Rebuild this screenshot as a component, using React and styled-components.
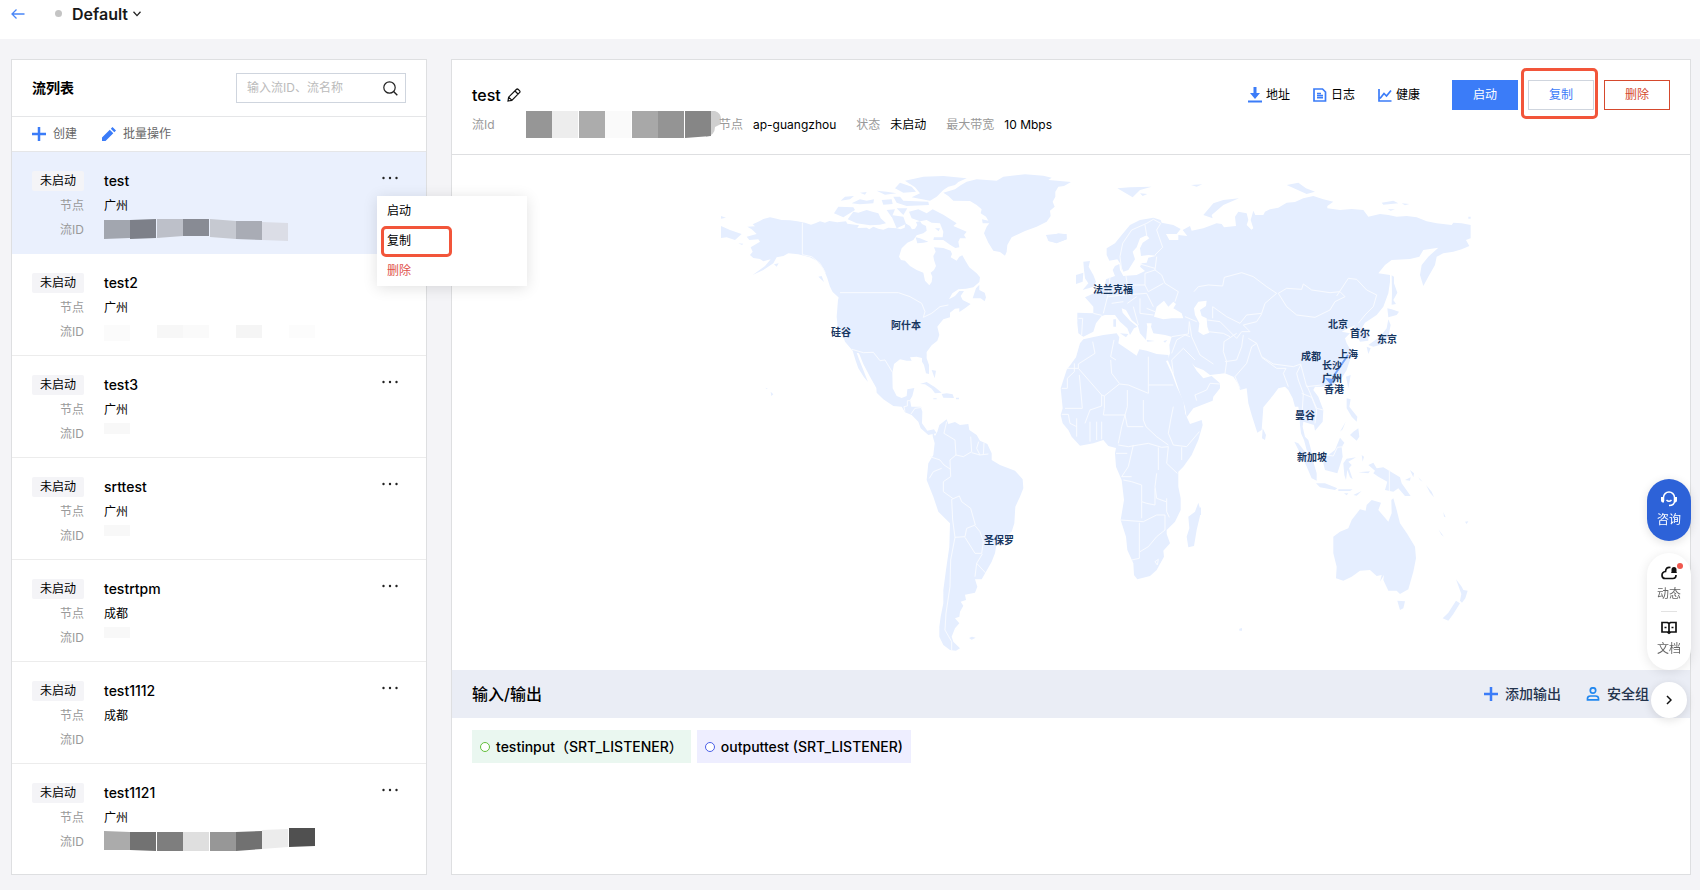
/** @format */
import { useState } from "react";
import styled, { createGlobalStyle, css } from "styled-components";

const streams = [
	{ id: 1, name: "test", node: "广州", mask: "blue" },
	{ id: 2, name: "test2", node: "广州", mask: "faint" },
	{ id: 3, name: "test3", node: "广州", mask: "single" },
	{ id: 4, name: "srttest", node: "广州", mask: "single" },
	{ id: 5, name: "testrtpm", node: "成都", mask: "single" },
	{ id: 6, name: "test1112", node: "成都", mask: "none" },
	{ id: 7, name: "test1121", node: "广州", mask: "dark" },
];

// four corner heights per tile: [x, topLeft, topRight, bottomRight, bottomLeft, colour]
const masks = {
	blue: [
		[0, 4, 4, 22, 23, "#a2a6af"],
		[26, 4, 3, 22, 23, "#7d8089"],
		[53, 3, 3, 20, 22, "#bdc0c9"],
		[79, 3, 3, 20, 20, "#888b94"],
		[106, 3, 5, 23, 21, "#c6c9d1"],
		[132, 5, 5, 24, 23, "#a9acb5"],
		[158, 6, 7, 25, 24, "#dbdde6"],
	],
	faint: [
		[0, 7, 7, 23, 23, "#fbfbfb"],
		[53, 7, 7, 20, 20, "#f7f7f7"],
		[79, 7, 7, 20, 20, "#fafafa"],
		[132, 7, 7, 20, 20, "#f5f5f5"],
		[185, 7, 7, 20, 20, "#fcfcfc"],
	],
	single: [[0, 3, 3, 14, 14, "#f8f8f8"]],
	none: [],
	dark: [
		[0, 3, 4, 22, 22, "#ababab"],
		[26, 4, 4, 23, 22, "#727272"],
		[53, 4, 4, 23, 23, "#7e7e7e"],
		[79, 4, 4, 23, 23, "#dfdfdf"],
		[106, 4, 4, 23, 23, "#979797"],
		[132, 4, 3, 21, 23, "#717171"],
		[158, 2, 1, 19, 21, "#ececec"],
		[185, 0, 0, 18, 19, "#505050"],
	],
	header: [
		[0, 0, 0, 27, 27, "#969696"],
		[26, 0, 0, 27, 27, "#ededed"],
		[53, 0, 0, 27, 27, "#acacac"],
		[79, 0, 0, 27, 27, "#fafafa"],
		[106, 0, 0, 27, 27, "#a8a8a8"],
		[132, 0, 0, 27, 27, "#949494"],
		[159, 0, 0, 25, 27, "#868686"],
	],
};

const cities = [
	{ name: "硅谷", x: 841, y: 332 },
	{ name: "阿什本", x: 906, y: 325 },
	{ name: "法兰克福", x: 1113, y: 289 },
	{ name: "北京", x: 1338, y: 324 },
	{ name: "首尔", x: 1360, y: 333 },
	{ name: "东京", x: 1387, y: 339 },
	{ name: "成都", x: 1311, y: 356 },
	{ name: "上海", x: 1348, y: 354 },
	{ name: "长沙", x: 1332, y: 365 },
	{ name: "广州", x: 1332, y: 378 },
	{ name: "香港", x: 1334, y: 389 },
	{ name: "曼谷", x: 1305, y: 415 },
	{ name: "新加坡", x: 1312, y: 457 },
	{ name: "圣保罗", x: 999, y: 540 },
];

// every region has its own origin, three units to one map unit
const regions = [
	{
		id: "north-america",
		origin: "710 160",
		land: [
			"M112 200L135 199 128 193 148 184 160 177 180 172 200 176 215 180 240 181 262 184 285 188 303 194 318 189 330 184 345 188 358 183 382 187 408 184 412 191 447 196 442 204 470 203 478 208 490 200 505 206 520 209 535 203 560 205 572 208 584 203 586 190 600 198 606 208 615 206 622 195 618 186 630 184 636 192 648 198 650 212 640 220 620 226 610 240 592 248 575 265 567 290 573 300 585 302 600 318 620 330 640 338 645 362 658 376 665 366 667 350 662 338 672 330 678 318 672 300 670 288 677 275 672 262 700 264 722 272 726 282 722 292 740 302 748 290 757 286 768 305 778 322 800 340 810 352 808 366 790 382 768 386 745 388 727 400 717 418 735 408 748 393 762 393 752 408 758 420 782 432 765 445 748 456 748 445 735 446 720 458 720 472 700 478 690 490 682 500 688 525 682 542 665 556 650 576 650 595 657 615 657 642 648 640 642 615 636 605 636 594 620 590 600 592 605 602 590 602 570 598 552 612 547 640 548 685 560 708 575 714 590 708 592 688 613 684 607 708 600 720 604 740 632 740 637 755 636 790 652 812 672 808 680 820 655 825 632 805 625 785 605 765 585 757 575 740 550 738 520 718 500 698 499 684 480 650 460 612 447 580 440 578 448 600 460 630 474 666 462 652 445 625 437 602 428 572 405 545 398 525 383 500 380 470 384 420 388 406 360 380 352 355 340 325 320 302 300 292 265 283 235 280 220 288 200 292 190 310 160 330 128 345 165 318 182 298 160 304 150 297 130 294 120 285 128 275 122 262 150 245 145 238 118 240 110 230 140 222 125 208Z",
			"M700 98L735 88 752 76 770 65 800 58 860 62 880 50 945 43 1000 47 1025 53 1015 60 1050 63 1083 66 1062 78 1045 80 1036 95 1036 110 1028 125 1034 140 1020 152 1022 168 1010 185 980 200 945 213 905 232 892 255 890 275 885 287 870 276 850 272 835 248 822 220 830 200 838 190 818 190 816 178 835 182 828 170 812 160 815 148 800 135 780 123 730 122 715 108Z",
			"M585 62L640 50 700 48 770 55 745 66 735 75 715 80 700 90 680 110 660 122 605 112 630 100 615 82Z M555 85L570 68 605 80 618 95 580 98Z",
			"M413 178L430 155 445 158 470 150 490 156 505 160 512 175 528 190 510 194 480 196 440 190Z M372 160L385 140 430 142 435 150 400 172Z",
			"M392 122L405 110 432 108 420 118Z M425 130L450 118 470 122 492 118 490 130 450 133Z M500 92L530 95 560 100 525 104Z M515 120L545 118 548 132 520 134Z M550 110L570 110 580 122 655 125 657 135 590 138 560 128Z M530 150L555 148 545 172Z M560 145L592 145 580 165Z M543 165L580 170 588 192 560 205Z M450 98L470 96 465 104Z",
			"M597 155L625 148 650 160 668 148 700 164 740 190 730 198 770 215 762 225 768 235 750 235 745 245 748 262 736 264 720 254 700 240 670 240 672 232 698 232 700 215 690 190 665 188 650 180 630 184 605 175Z M617 232L630 235 655 245 640 248 622 250Z M675 205L690 205 686 214Z",
			"M788 415L798 385 808 374 808 390 824 398 828 412 824 424 812 415Z M1007 225L1020 228 1045 220 1068 223 1070 238 1040 248 1018 244 1020 236Z",
			"M630 672L650 666 675 682 695 698 675 700 665 686 645 673Z M695 702L710 700 728 703 732 714 700 713Z M670 715H680V718H670Z M738 713H747V718H738Z M182 695L190 703 184 708Z M167 683L174 686 168 686Z M665 630L678 632 674 655Z",
			"M33 198L60 210 95 222 75 240 50 232 33 234Z M33 168L48 173 33 176Z M325 350L335 348 342 366Z M360 380L390 402 390 416 368 396Z M192 313L206 310 200 320Z M85 250L100 251 96 255Z",
		],
		borders: [
			"M277 188V284L305 290 330 310 346 338",
			"M390 398H565L600 410 635 430 645 455 640 472 665 460 690 440 715 435",
			"M426 568L460 578 490 577 510 602 525 600 548 638",
			"M585 755L582 740 592 738 592 722 604 722 M603 762L615 745 636 742",
		],
	},
	{
		id: "south-america",
		origin: "900 400",
		land: [
			"M98 95L105 108 112 95 118 75 140 58 145 72 165 66 180 75 205 72 208 90 230 105 240 122 262 132 275 160 275 180 300 195 345 212 368 238 370 265 360 290 346 320 343 370 335 395 310 412 290 430 285 460 275 485 258 515 245 538 225 538 232 560 225 578 195 584 198 600 182 605 190 617 180 635 178 650 165 655 178 670 165 685 155 710 160 725 180 745 168 752 150 750 130 735 118 710 118 680 122 650 130 610 130 570 138 510 148 440 150 370 115 335 100 290 80 240 85 190 100 165 104 130 98 108Z",
			"M207 714L216 710 227 713 215 719Z",
		],
		borders: [
			"M90 170L120 180 132 195 152 208 M140 65L132 100 165 120 168 165 150 180 152 230 130 245 130 275 158 295",
			"M168 165L190 170 215 155 212 110 M215 158L240 165 265 162 M236 125L230 145 240 165 M252 128L250 165",
			"M155 298L178 288 185 305 212 325 226 375 200 385 195 410 165 412 158 360 155 298 M226 378L240 395 250 425 245 460 225 460 195 412 M258 520L230 490 247 462 M230 490L225 530",
			"M165 412L152 480 150 560 138 640 135 690 155 725 V750 M88 235L100 215 125 205",
		],
	},
	{
		id: "africa",
		origin: "1040 160",
		land: [
			"M130 538L165 530 190 525 230 520 238 532 235 550 265 570 290 587 298 568 320 572 350 582 385 585 387 600 378 603 395 640 410 680 430 722 436 762 450 792 485 780 488 795 475 840 455 885 430 920 415 935 415 980 422 1015 422 1050 405 1085 380 1110 380 1122 390 1150 370 1172 372 1190 350 1230 330 1248 292 1258 282 1245 280 1210 262 1170 258 1130 242 1080 252 1020 245 960 228 920 225 880 228 864 205 858 190 840 160 850 120 857 95 830 85 810 68 790 62 765 68 745 62 685 80 630 108 592 120 550Z",
			"M475 1028L483 1055 470 1110 462 1158 445 1162 440 1130 448 1105 445 1070 465 1055Z",
		],
		borders: [
			"M158 545L165 580 115 612 115 625 185 705 193 708 238 672 265 675 325 700V590 M325 675H400 M212 600L215 640 238 670 M222 540L212 590 228 600 M65 685H82V655L103 635V610 M118 645L127 745 75 745 M80 625H115",
			"M185 705V738L150 750 135 790 M193 708V745L190 765 M262 690V740L255 765 M190 765H255L262 800 310 800 M310 720V780L318 800 M65 763H85L90 790 110 800 M110 775V830 M150 785V845 M170 785V840 M185 785V838",
			"M255 765L245 800 235 850 M235 855L265 860 295 855 325 850 365 862 385 860 M318 800L350 830 385 855 M400 740L392 780 385 820 400 855 440 860 478 815 M425 862V900 M385 860L380 910 412 940 M355 862V930 M228 880H262 M280 855L265 920 245 950H275 M275 965L305 975V1025 M275 965L250 960 M350 940L345 980 350 1015 378 1025 M345 985V1035L320 1030 305 1025V1075 M242 1080L310 1085 350 1065 375 1065 M298 1088V1195L275 1200 M375 1065V1110L350 1130 325 1160 300 1175 M345 1205L355 1198 352 1215Z M380 1015V1055L388 1072",
		],
	},
	{
		id: "eurasia",
		origin: "1040 160",
		land: [
			"M112 458L160 460 160 440 135 412 150 405 172 395 195 375 198 358 225 348 218 330 225 318 238 312 240 330 250 348 290 345 315 333 300 320 305 310 320 308 325 293 350 287 325 285 303 288 300 265 308 248 328 235 320 226 300 235 290 262 278 275 285 298 265 330 250 335 240 310 232 298 208 302 200 285 200 265 225 250 245 225 270 195 300 180 340 173 362 180 365 188 400 195 422 207 410 222 378 222 388 240 415 240 415 225 442 228 428 210 450 198 455 212 490 205 530 190 545 192 552 202 588 198 585 170 595 155 620 160 625 180 620 195 635 210 618 222 640 205 632 180 640 152 646 165 670 165 675 155 690 148 715 143 740 128 765 126 790 115 820 108 850 118 880 125 862 138 862 145 900 150 935 147 970 150 985 170 1020 162 1045 165 1070 170 1100 168 1130 172 1160 184 1190 190 1235 195 1240 188 1265 190 1292 195 1292 235 1278 240 1288 258 1265 268 1240 275 1210 280 1190 290 1185 315 1165 350 1150 378 1140 345 1145 315 1165 290 1195 263 1150 270 1138 290 1110 297 1055 300 1035 315 1015 340 1050 345 1050 365 1045 400 1030 440 1010 465 975 488 965 505 985 525 985 542 960 545 950 525 945 505 935 512 945 496 925 505 905 515 930 520 915 535 920 550 935 575 930 600 920 630 905 655 880 675 845 680 825 680 820 690 835 710 850 750 848 785 825 812 822 795 805 790 790 785 788 800 795 830 805 840 815 875 812 885 800 870 792 840 783 820 780 795 778 760 775 740 765 740 758 715 745 690 735 680 715 685 700 705 670 742 665 810 652 818 635 765 625 730 620 685 600 690 595 672 580 650 555 640 510 645 490 630 465 620 455 608 470 632 490 655 515 648 540 670 540 685 520 710 518 722 460 745 440 772 435 740 420 700 400 640 383 600 390 580 388 555 395 530 375 525 340 520 333 500 335 490 320 490 322 500 318 540 300 520 293 495 275 480 258 450 245 445 248 458 270 482 292 500 282 505 270 525 262 505 240 485 225 465 195 465 185 468 168 490 160 515 130 530 115 520 112 490Z",
			"M130 305L150 303 146 320 160 345 168 365 160 380 128 390 145 370 135 355 132 330Z M108 345L130 338 128 365 108 372Z M18 225L45 222 80 222 80 238 50 250 25 243Z",
			"M232 85L270 82 335 80 300 90 278 112Z M300 100L322 102 308 108Z M490 165L520 130 550 120 597 115 550 135 515 165 518 175Z M740 75L775 68 798 85 825 95 800 102Z M1025 128L1060 122 1075 130 1030 134Z M1085 130L1108 132 1095 136Z M1043 148L1065 148 1052 152Z M453 75L487 73 470 80Z M1285 170H1292V176H1285Z",
			"M1055 346L1062 350 1062 370 1072 398 1060 420 1068 432 1055 434 1056 400Z M1042 445L1055 448 1077 455 1070 465 1045 472Z M1045 478L1052 495 1045 530 1030 552 1000 560 985 555 1020 530 1040 505Z M980 560L992 565 985 582Z M918 650L932 645 925 685Z M240 520L265 522 258 532Z M220 478L228 478 228 500 220 500Z M320 540L345 543 322 545Z M370 543L382 540 375 548Z",
		],
		seas: [
			"M342 470L350 440 372 422 385 440 400 425 408 432 400 445 425 460 430 475 395 475 370 478Z",
			"M462 445L475 425 500 422 498 438 480 450 485 468 500 475 502 500 508 518 490 525 475 515 478 490 465 465Z",
		],
		borders: [
			"M462 395L475 380 505 375 548 378 553 352 605 338 640 350 680 380 710 400 675 430 665 460 620 465 600 490 560 470 518 440V475",
			"M715 400L740 385 785 388 790 372 815 390 870 398 900 395 915 410 885 425 870 450 825 472 770 465 740 440Z M890 408L925 355 950 358 980 390 1010 405 1000 440 975 465 955 490",
			"M502 480L540 485 590 535 605 515 630 515 610 495 650 485 665 462 M448 485L455 530 480 585 520 612 M505 515L550 520 570 530 M555 640L560 605 550 575 552 545 590 520 M555 605L590 600 605 560 610 525",
			"M625 535L650 550 665 590 700 612 760 620 782 612 M600 685L585 650 620 610 635 560 650 550 M665 592L710 625 738 625 M738 625L730 640 745 680 M782 615L770 640 775 660 M775 660L790 700 785 780 M800 675L830 745 850 750 M785 700L815 712 830 750 825 790 M782 612L800 680 845 675",
			"M245 330L240 290 248 250 275 210 320 190 340 178 M320 226L315 195 M340 178L362 190 350 210 368 262 345 285 M350 290L345 330 365 345 375 370 415 395 405 425 M300 312L345 325 M258 348L262 375 315 375 315 340 345 330 M315 375L325 395 370 370 M210 350L205 400 190 460 M205 410L250 405 262 375 M250 405L320 400 340 440 M262 430L290 410 M300 415L300 460 340 465 M280 440L295 495 M215 430L250 425 M320 445L345 455 M115 475L128 475 125 525 M160 460L185 466",
			"M395 580L410 540 435 525 450 530 M395 600L430 565 465 600 M400 640L395 600 M470 722L465 705 500 690 510 670 540 672 M435 470L470 485 M395 530L445 522 448 485",
		],
	},
	{
		id: "oceania",
		origin: "1200 390",
		land: [
			"M400 440L420 425 445 415 455 390 480 358 497 362 500 345 515 330 543 338 535 360 565 395 575 370 574 330 580 325 590 360 600 400 622 432 645 470 648 505 640 545 625 598 600 612 590 602 565 602 550 570 552 555 540 575 545 555 530 558 510 540 480 542 455 560 430 572 408 565 410 530 400 490Z M592 632L615 634 610 655 600 660Z",
			"M768 568L785 590 790 600 803 602 796 625 786 638 780 632 784 612Z M768 632L780 640 760 672 745 692 728 685 745 668Z",
			"M440 25L452 28 448 50 460 65 472 80 470 95 455 80 440 55Z M460 125L475 115 478 140 470 152 450 135Z M420 125L437 95 428 118Z M188 115L198 135 195 150 186 145Z",
			"M283 155L295 160 315 185 340 215 350 250 350 272 335 265 318 225Z M348 280L375 280 412 295 405 300 360 292Z M415 298H458L450 303H415Z M460 315L485 303 470 317Z M432 310H445L440 316Z",
			"M375 205L385 195 405 180 420 143 433 158 425 172 428 200 412 250 375 240 370 220Z M430 220L440 206 468 202 445 215 455 225 447 235 458 268 450 262 442 240 438 270 433 255Z M485 195L492 200 488 215Z M475 247L510 244 505 250Z",
			"M505 225L520 218 530 235 550 232 600 262 605 280 632 318 615 318 595 295 580 305 555 300 562 275 535 260 520 250 525 242Z M615 270L632 262 630 272Z M630 240L642 250 640 262Z M655 262L668 275 660 270Z M678 285L695 305 702 322 690 308Z M715 418L732 440 724 434Z M730 366L737 382 732 380Z M795 395L805 394 800 402Z M805 385L812 378Z M118 716L126 714 126 722 118 722Z M0 350L3 355 3 375 0 375Z",
		],
		borders: ["M568 240V304 M378 195L400 198 412 172 430 170"],
	},
];

const Mosaic = ({ tiles, tail }) => (
	<MosaicArt width='212' height='28' viewBox='0 0 212 28' aria-hidden='true'>
		{tail && (
			<path
				d='M180 0h9q6 2 6 8v5l-6 3q0 8-9 10z'
				fill='#cfcfcf'
			/>
		)}
		{tiles.map(([x, tl, tr, br, bl, fill]) => (
			<path key={x} d={`M${x} ${tl}L${x + 26} ${tr}V${br}L${x} ${bl}Z`} fill={fill} />
		))}
	</MosaicArt>
);

const WorldMap = () => (
	<MapArt viewBox='452 155 1238 515' role='img' aria-label='节点分布'>
		{regions.map((region) => (
			<g
				key={region.id}
				transform={`translate(${region.origin}) scale(0.33333)`}>
				{region.land.map((d) => (
					<path key={d} d={d} fill='#e5eeff' />
				))}
				{region.seas?.map((d) => (
					<path key={d} d={d} fill='#fff' />
				))}
				{region.borders.map((d) => (
					<path
						key={d}
						d={d}
						fill='none'
						stroke='#f9fbff'
						strokeWidth='3'
						strokeLinejoin='round'
					/>
				))}
			</g>
		))}
		<path d='M1348 355L1333 377' stroke='#79a9fb' strokeWidth='2' />
		<path d='M1325 378l10 1-4 6z' fill='#79a9fb' />
		{cities.map((city) => (
			<CityName key={city.name} x={city.x} y={city.y}>
				{city.name}
			</CityName>
		))}
	</MapArt>
);

const PlusIcon = () => (
	<svg width='14' height='14' viewBox='0 0 14 14' aria-hidden='true'>
		<path d='M7 0v14M0 7h14' stroke='#3b7cf8' strokeWidth='2.500' />
	</svg>
);

const App = () => {
	const [keyword, setKeyword] = useState("");

	return (
		<Page>
			<GlobalStyle />
			<TopBar>
				<BackButton type='button' aria-label='返回'>
					<svg width='14' height='10' viewBox='0 0 14 10'>
						<path
							d='M13.500 5H1M5.500 .5L1 5l4.500 4.500'
							fill='none'
							stroke='#4a86f7'
							strokeWidth='1.300'
						/>
					</svg>
				</BackButton>
				<StatusDot />
				<ProjectButton type='button'>
					Default
					<svg width='8' height='6' viewBox='0 0 8 6' aria-hidden='true'>
						<path
							d='M.5 .8L4 4.600 7.500 .8'
							fill='none'
							stroke='#222'
							strokeWidth='1.300'
						/>
					</svg>
				</ProjectButton>
			</TopBar>

			<Main>
				<SidePanel>
					<SideHeader>
						<SideTitle>流列表</SideTitle>
						<SearchBox>
							<input
								type='text'
								aria-label='搜索'
								placeholder='输入流ID、流名称'
								value={keyword}
								onChange={(e) => setKeyword(e.target.value)}
							/>
							<svg width='15' height='15' viewBox='0 0 15 15' aria-hidden='true'>
								<circle
									cx='6.500'
									cy='6.500'
									r='5.700'
									fill='none'
									stroke='#222'
									strokeWidth='1.200'
								/>
								<path d='M10.600 10.600l3.700 3.700' stroke='#222' strokeWidth='1.400' />
							</svg>
						</SearchBox>
					</SideHeader>

					<SideToolbar>
						<TextButton type='button'>
							<PlusIcon />
							创建
						</TextButton>
						<TextButton type='button'>
							<svg width='14' height='14' viewBox='0 0 14 14' aria-hidden='true'>
								<path
									d='M0 14v-3.500l7.800-7.800 3.500 3.500L3.500 14zM8.800 1.700L10.500 0 14 3.500l-1.700 1.700z'
									fill='#3b7cf8'
								/>
							</svg>
							批量操作
						</TextButton>
					</SideToolbar>

					<StreamList>
						{streams.map((stream, index) => (
							<StreamItem key={stream.id} $active={index === 0}>
								<StateTag>未启动</StateTag>
								<StreamName>{stream.name}</StreamName>
								<MoreButton type='button' aria-label='更多'>
									<svg width='16' height='4' viewBox='0 0 16 4'>
										<circle cx='1.500' cy='2' r='1.200' fill='#222' />
										<circle cx='8' cy='2' r='1.200' fill='#222' />
										<circle cx='14.500' cy='2' r='1.200' fill='#222' />
									</svg>
								</MoreButton>
								<FieldLabel>节点</FieldLabel>
								<FieldValue>{stream.node}</FieldValue>
								<FieldLabel>流ID</FieldLabel>
								<FieldValue>
									<Mosaic tiles={masks[stream.mask]} />
								</FieldValue>
								{index === 0 && (
									<Menu>
										<MenuItem type='button'>启动</MenuItem>
										<MenuItem type='button'>复制</MenuItem>
										<MenuItem type='button' $danger>
											删除
										</MenuItem>
										<MenuMark />
									</Menu>
								)}
							</StreamItem>
						))}
					</StreamList>
				</SidePanel>

				<DetailPanel>
					<DetailHeader>
						<DetailInfo>
							<DetailTitle>
								test
								<button type='button' aria-label='编辑名称'>
									<svg width='14' height='14' viewBox='0 0 14 14'>
										<path
											d='M1 13l.6-3.800L9.300 1.500q1-1 2 0l1.200 1.200q1 1 0 2L4.800 12.400zM8 3l3 3M1.700 9.200l3 3'
											fill='none'
											stroke='#111'
											strokeWidth='1.200'
										/>
									</svg>
								</button>
							</DetailTitle>
							<Facts>
								<FactId>
									<dt>流Id</dt>
									<dd>
										<Mosaic tiles={masks.header} tail />
									</dd>
								</FactId>
								<Fact>
									<dt>节点</dt>
									<dd>ap-guangzhou</dd>
								</Fact>
								<Fact>
									<dt>状态</dt>
									<dd>未启动</dd>
								</Fact>
								<Fact>
									<dt>最大带宽</dt>
									<dd>10 Mbps</dd>
								</Fact>
							</Facts>
						</DetailInfo>

						<Actions>
							<LinkGroup>
								<IconLink href='#address'>
									<svg width='14' height='16' viewBox='0 0 14 16' aria-hidden='true'>
										<path
											d='M5.500 0h3v6H12l-5 6-5-6h3.500zM0 13.500h14v2H0z'
											fill='#3b7cf8'
										/>
									</svg>
									地址
								</IconLink>
								<IconLink href='#log'>
									<svg width='14' height='14' viewBox='0 0 14 14' aria-hidden='true'>
										<path
											d='M1 1h8.500L12.500 4v9H1zM4 5.500h4M4 7.500h6M4 9.700h6'
											fill='none'
											stroke='#3b7cf8'
											strokeWidth='1.700'
										/>
									</svg>
									日志
								</IconLink>
								<IconLink href='#health'>
									<svg width='14' height='14' viewBox='0 0 14 14' aria-hidden='true'>
										<path
											d='M1 1v12h12.500M2 10.500l4-5 2.500 2.500 4.500-5.500'
											fill='none'
											stroke='#3b7cf8'
											strokeWidth='1.700'
										/>
									</svg>
									健康
								</IconLink>
							</LinkGroup>
							<ActionButton type='button' $kind='primary'>
								启动
							</ActionButton>
							<MarkedAction>
								<ActionButton type='button'>复制</ActionButton>
							</MarkedAction>
							<ActionButton type='button' $kind='danger'>
								删除
							</ActionButton>
						</Actions>
					</DetailHeader>

					<WorldMap />

					<IoHeader>
						<h2>输入/输出</h2>
						<IoActions>
							<IoButton type='button'>
								<PlusIcon />
								添加输出
							</IoButton>
							<IoButton type='button'>
								<svg width='14' height='14' viewBox='0 0 14 14' aria-hidden='true'>
									<circle
										cx='7'
										cy='3.500'
										r='2.700'
										fill='none'
										stroke='#2288ef'
										strokeWidth='1.700'
									/>
									<path
										d='M1.500 12.800v-1.300Q1.500 9 4.500 9h5q3 0 3 2.500v1.300z'
										fill='none'
										stroke='#2288ef'
										strokeWidth='1.700'
									/>
								</svg>
								安全组
							</IoButton>
						</IoActions>
					</IoHeader>

					<IoBody>
						<Chip $bg='#eaf7f0' $ring='#62bf3b'>
							testinput（SRT_LISTENER）
						</Chip>
						<Chip $bg='#eeeeff' $ring='#4a5fe8'>
							outputtest (SRT_LISTENER)
						</Chip>
					</IoBody>
				</DetailPanel>
			</Main>

			<FloatBar>
				<ConsultButton type='button'>
					<svg width='16' height='16' viewBox='0 0 16 16' aria-hidden='true'>
						<path
							d='M2.500 10V6.500a5.500 5.500 0 0 1 11 0V10q0 4.500-5.500 4.500'
							fill='none'
							stroke='#fff'
							strokeWidth='1.500'
						/>
						<path d='M0 6h3v5.500H1.500Q0 11 0 9.500zM13 6h3v3.500q0 1.500-1.500 2H13z' fill='#fff' />
						<path
							d='M5.500 9q2.500 2.500 5 0'
							fill='none'
							stroke='#fff'
							strokeWidth='1.500'
						/>
					</svg>
					咨询
				</ConsultButton>
				<FloatGroup>
					<FloatButton type='button'>
						<svg width='16' height='14' viewBox='0 0 16 14' aria-hidden='true'>
							<path
								d='M9.500 1.500Q5 .5 4.500 5.500 1 6 1 9.200 1 12.500 4.200 12.500h7.600q3.200 0 3.200-3.500'
								fill='none'
								stroke='#111'
								strokeWidth='1.700'
							/>
							<path d='M10.500 6V3.500q0-2.500 2.500-2.500t2.500 2.500V6l.5 1h-6z' fill='#111' />
						</svg>
						动态
						<NewDot />
					</FloatButton>
					<FloatLine />
					<FloatButton type='button'>
						<svg width='16' height='14' viewBox='0 0 16 14' aria-hidden='true'>
							<path
								d='M1 1.500h5.500L8 2.500l1.500-1H15v9.500H9.500L8 12.200 6.500 11H1zM8 2.500V13'
								fill='none'
								stroke='#111'
								strokeWidth='1.700'
							/>
							<path d='M3.500 6.500h2M10.500 6.500h2' stroke='#111' strokeWidth='1.500' />
						</svg>
						文档
					</FloatButton>
				</FloatGroup>
				<CollapseButton type='button' aria-label='收起'>
					<svg width='6' height='10' viewBox='0 0 6 10'>
						<path
							d='M1 1l4 4-4 4'
							fill='none'
							stroke='#111'
							strokeWidth='1.500'
						/>
					</svg>
				</CollapseButton>
			</FloatBar>
		</Page>
	);
};

export default App;

const GlobalStyle = createGlobalStyle`
	*,
	*::before,
	*::after {
		box-sizing: border-box;
	}

	body {
		margin: 0;
		background: #f4f4f7;
		color: #000;
		font-family: Inter, "Noto Sans CJK SC", sans-serif;
		font-size: 12px;
		line-height: 20px;
	}

	button,
	input {
		font: inherit;
		color: inherit;
	}

	button {
		padding: 0;
		border: none;
		background: none;
		cursor: pointer;
	}

	h1,
	h2,
	ul,
	dl,
	dd {
		margin: 0;
		padding: 0;
	}
`;

const Page = styled.div`
	display: flex;
	flex-direction: column;
	min-height: 100vh;
`;

const TopBar = styled.header`
	display: flex;
	align-items: center;
	height: 39px;
	padding: 0 11px 12px;
	background: #fff;
`;

const BackButton = styled.button`
	display: flex;
`;

const StatusDot = styled.span`
	width: 7px;
	height: 7px;
	margin: 0 10px 0 30px;
	border-radius: 50%;
	background: #c4c4c4;
`;

const ProjectButton = styled.button`
	display: flex;
	align-items: center;
	gap: 5px;
	color: #181818;
	font-size: 16px;
	font-weight: 600;
`;

const Main = styled.main`
	display: flex;
	flex: 1;
	gap: 24px;
	padding: 20px 9px 15px 11px;
`;

const panel = css`
	display: flex;
	flex-direction: column;
	border: 1px solid #dedfe1;
	background: #fff;
`;

const SidePanel = styled.aside`
	${panel}
	flex: 0 0 416px;
	position: relative;
	z-index: 1;
`;

const SideHeader = styled.div`
	display: flex;
	align-items: center;
	justify-content: space-between;
	height: 57px;
	padding: 0 20px;
	border-bottom: 1px solid #e5e6e8;
`;

const SideTitle = styled.h2`
	font-size: 14px;
	font-weight: 700;
`;

const SearchBox = styled.div`
	display: flex;
	align-items: center;
	width: 170px;
	height: 30px;
	padding: 0 7px 0 10px;
	border: 1px solid #cfd5de;

	input {
		flex: 1;
		min-width: 0;
		padding: 0;
		border: none;
		outline: none;
		background: transparent;

		&::placeholder {
			color: #bbb;
		}
	}
`;

const SideToolbar = styled.div`
	display: flex;
	align-items: center;
	gap: 25px;
	height: 35px;
	padding: 0 20px;
	border-bottom: 1px solid #e5e6e8;
`;

const TextButton = styled.button`
	display: flex;
	align-items: center;
	gap: 7px;
	color: #666;
`;

const StreamList = styled.ul`
	list-style: none;
`;

const StreamItem = styled.li`
	position: relative;
	display: grid;
	grid-template-columns: 52px 1fr auto;
	grid-template-rows: 22px 28px 20px;
	column-gap: 20px;
	align-items: center;
	height: 102px;
	padding: 18px 28px 0 20px;
	border-bottom: 1px solid ${(props) => (props.$active ? "#eaf0fd" : "#ececec")};
	background: ${(props) => (props.$active ? "#eaf0fd" : "#fff")};

	&:last-child {
		border-bottom: none;
	}
`;

const StateTag = styled.span`
	height: 20px;
	border-radius: 2px;
	background: #f4f4f7;
	text-align: center;
`;

const StreamName = styled.span`
	font-size: 14px;
	font-weight: 500;
	line-height: 24px;
`;

const MoreButton = styled.button`
	display: flex;
	height: 16px;
	align-items: center;
	align-self: start;
`;

const FieldLabel = styled.span`
	grid-column: 1;
	color: #999;
	text-align: right;
`;

const FieldValue = styled.span`
	grid-column: 2 / 4;
`;

const MosaicArt = styled.svg`
	display: block;
`;

const Menu = styled.div`
	position: absolute;
	top: 44px;
	right: -101px;
	z-index: 2;
	display: flex;
	flex-direction: column;
	width: 150px;
	background: #fff;
	box-shadow: 0 2px 14px rgba(0, 0, 0, 0.12);
`;

const MenuItem = styled.button`
	height: 30px;
	padding: 0 10px;
	color: ${(props) => (props.$danger ? "#e0534a" : "#000")};
	text-align: left;
`;

const MenuMark = styled.span`
	position: absolute;
	top: 30px;
	left: 4px;
	width: 71px;
	height: 31px;
	border: 3px solid #f2553a;
	border-radius: 5px;
	pointer-events: none;
`;

const DetailPanel = styled.section`
	${panel}
	flex: 1;
	min-width: 0;
`;

const DetailHeader = styled.div`
	display: flex;
	justify-content: space-between;
	height: 95px;
	padding: 20px 20px 0;
	border-bottom: 1px solid #dedfe1;
`;

const DetailInfo = styled.div`
	padding-top: 4px;
`;

const DetailTitle = styled.h1`
	display: flex;
	align-items: center;
	gap: 6px;
	height: 22px;
	font-size: 16px;
	font-weight: 500;

	button {
		display: flex;
	}
`;

const Facts = styled.dl`
	display: flex;
	align-items: center;
	height: 38px;
	gap: 20px;
`;

const Fact = styled.div`
	display: flex;
	gap: 10px;
	white-space: nowrap;

	dt {
		color: #999;
	}
`;

const FactId = styled(Fact)`
	align-items: center;
	width: 227px;
	gap: 31px;
`;

const Actions = styled.div`
	display: flex;
	gap: 10px;
`;

const LinkGroup = styled.nav`
	display: flex;
	align-items: center;
	height: 30px;
	gap: 23px;
	padding-right: 22px;
`;

const IconLink = styled.a`
	display: flex;
	align-items: center;
	gap: 4px;
	color: #000;
	text-decoration: none;
`;

const kinds = {
	primary: css`
		border-color: #3b7cf8;
		background: #3b7cf8;
		color: #fff;
	`,
	danger: css`
		border-color: #d5492d;
		color: #d5492d;
	`,
};

const ActionButton = styled.button`
	width: 66px;
	height: 30px;
	border: 1px solid #cfd5de;
	color: #3b7cf8;
	${(props) => kinds[props.$kind]}
`;

const MarkedAction = styled.div`
	position: relative;

	&::after {
		content: "";
		position: absolute;
		top: -12px;
		left: -7px;
		width: 77px;
		height: 51px;
		border: 3px solid #f2553a;
		border-radius: 5px;
		pointer-events: none;
	}
`;

const MapArt = styled.svg`
	display: block;
	width: 100%;
`;

const CityName = styled.text`
	fill: #17365f;
	font-size: 10px;
	font-weight: 600;
	text-anchor: middle;
	dominant-baseline: central;
`;

const IoHeader = styled.div`
	display: flex;
	align-items: center;
	justify-content: space-between;
	height: 48px;
	padding: 0 41px 0 20px;
	background: #eaedf5;

	h2 {
		font-size: 16px;
		font-weight: 500;
	}
`;

const IoActions = styled.div`
	display: flex;
	gap: 25px;
`;

const IoButton = styled.button`
	display: flex;
	align-items: center;
	gap: 7px;
	color: #24344d;
	font-size: 14px;
	font-weight: 500;
`;

const IoBody = styled.div`
	display: flex;
	flex-wrap: wrap;
	gap: 6px;
	padding: 12px 20px;
`;

const Chip = styled.span`
	display: flex;
	align-items: center;
	gap: 6px;
	height: 33px;
	padding: 0 8px;
	background: ${(props) => props.$bg};
	font-size: 14px;
	font-weight: 500;

	&::before {
		content: "";
		width: 10px;
		height: 10px;
		border: 1px solid ${(props) => props.$ring};
		border-radius: 50%;
		background: #fff;
	}
`;

const FloatBar = styled.aside`
	position: fixed;
	right: 9px;
	bottom: 172px;
	z-index: 3;
	display: flex;
	flex-direction: column;
	align-items: center;
	gap: 12px;
	width: 44px;
`;

const ConsultButton = styled.button`
	display: flex;
	flex-direction: column;
	align-items: center;
	justify-content: center;
	gap: 3px;
	width: 44px;
	height: 62px;
	border-radius: 22px;
	background: #2d62d8;
	box-shadow: 0 2px 10px rgba(0, 0, 0, 0.12);
	color: #fff;
`;

const FloatGroup = styled.div`
	display: flex;
	flex-direction: column;
	align-items: center;
	width: 44px;
	height: 117px;
	padding-top: 13px;
	border-radius: 22px;
	background: #fff;
	box-shadow: 0 2px 12px rgba(0, 0, 0, 0.1);
`;

const FloatButton = styled.button`
	position: relative;
	display: flex;
	flex-direction: column;
	align-items: center;
	gap: 4px;
	color: #666;
`;

const NewDot = styled.span`
	position: absolute;
	top: -3px;
	right: -2px;
	width: 6px;
	height: 6px;
	border-radius: 50%;
	background: #f0584e;
`;

const FloatLine = styled.span`
	width: 16px;
	height: 1px;
	margin: 7px 0 9px;
	background: #e2e2e2;
`;

const CollapseButton = styled.button`
	display: flex;
	align-items: center;
	justify-content: center;
	width: 36px;
	height: 36px;
	border-radius: 50%;
	background: #fff;
	box-shadow: 0 2px 10px rgba(0, 0, 0, 0.12);
`;
